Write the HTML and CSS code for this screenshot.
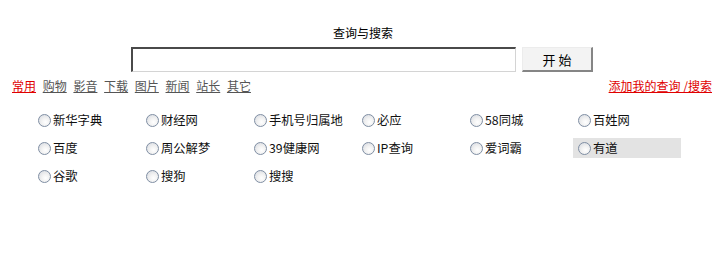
FILE: index.html
```html
<!DOCTYPE html>
<html lang="zh-CN">
<head>
<meta charset="utf-8">
<title>查询与搜索</title>
<link rel="stylesheet" href="styles.css">
</head>
<body>
<div class="page">
  <div class="title">查询与搜索</div>
  <form class="search" onsubmit="return false">
    <input class="query" type="text">
    <button class="go" type="submit">开 始</button>
  </form>
  <div class="nav">
    <div class="tabs">
      <a class="tab active" href="#">常用</a>
      <a class="tab" href="#">购物</a>
      <a class="tab" href="#">影音</a>
      <a class="tab" href="#">下载</a>
      <a class="tab" href="#">图片</a>
      <a class="tab" href="#">新闻</a>
      <a class="tab" href="#">站长</a>
      <a class="tab" href="#">其它</a>
    </div>
    <a class="add" href="#">添加我的查询 /搜索</a>
  </div>
  <div class="grid">
    <label class="cell"><span class="radio"></span>新华字典</label>
    <label class="cell"><span class="radio"></span>财经网</label>
    <label class="cell"><span class="radio"></span>手机号归属地</label>
    <label class="cell"><span class="radio"></span>必应</label>
    <label class="cell"><span class="radio"></span>58同城</label>
    <label class="cell"><span class="radio"></span>百姓网</label>
    <label class="cell"><span class="radio"></span>百度</label>
    <label class="cell"><span class="radio"></span>周公解梦</label>
    <label class="cell"><span class="radio"></span>39健康网</label>
    <label class="cell"><span class="radio"></span>IP查询</label>
    <label class="cell"><span class="radio"></span>爱词霸</label>
    <label class="cell hover"><span class="radio"></span>有道</label>
    <label class="cell"><span class="radio"></span>谷歌</label>
    <label class="cell"><span class="radio"></span>搜狗</label>
    <label class="cell"><span class="radio"></span>搜搜</label>
  </div>
</div>
</body>
</html>
```

FILE: styles.css
```css
* { box-sizing: border-box; }
html, body { margin: 0; padding: 0; background: #fff; }
body {
  font-family: "Noto Sans CJK SC", "Liberation Sans", sans-serif;
  font-size: 12px;
  color: #000;
}
.page {
  width: 720px;
  height: 272px;
  padding: 25px 8px 0 12px;
}
.title {
  text-align: center;
  line-height: 16px;
  height: 16px;
  padding-left: 2px;
}
.search {
  display: flex;
  justify-content: center;
  gap: 6px;
  margin: 6px 0 0;
}
.query {
  width: 385px;
  height: 25px;
  margin: 0;
  padding: 0 4px;
  border-top: 2px solid #4a4a4a;
  border-left: 2px solid #4a4a4a;
  border-right: 1px solid #d4d4d4;
  border-bottom: 1px solid #d4d4d4;
  background: #fff;
  outline: none;
}
.go {
  width: 71px;
  height: 25px;
  margin: 0;
  padding: 0;
  font-family: inherit;
  font-size: 13px;
  color: #000;
  background: #f3f3f3;
  border-top: 1px solid #ececec;
  border-left: 1px solid #ececec;
  border-right: 2px solid #858585;
  border-bottom: 2px solid #858585;
}
.nav {
  display: flex;
  justify-content: space-between;
  align-items: center;
  margin-top: 6px;
  line-height: 16px;
  height: 16px;
}
.tabs { display: flex; gap: 6.7px; }
.tab {
  color: #555;
  text-decoration: underline;
}
.tab.active { color: #e00000; }
.add {
  color: #e00000;
  text-decoration: underline;
}
.grid {
  display: grid;
  grid-template-columns: repeat(6, 108px);
  grid-auto-rows: 20px;
  row-gap: 8px;
  margin: 16px 0 0 21px;
}
.cell {
  display: flex;
  align-items: center;
  padding-left: 5px;
  font-size: 12.3px;
  color: #111;
}
.cell.hover { background: #e3e3e3; }
.radio {
  width: 13px;
  height: 13px;
  margin-right: 2px;
  border-radius: 50%;
  border: 1px solid #7f8ea3;
  background: radial-gradient(circle at 60% 65%, #ffffff 0%, #f2f2f2 40%, #d3d7de 100%);
  flex: none;
}
```
